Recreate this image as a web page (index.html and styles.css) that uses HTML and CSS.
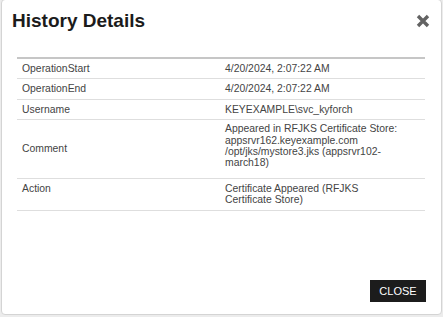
FILE: index.html
```html
<!DOCTYPE html>
<html>
<head>
<meta charset="utf-8">
<link rel="stylesheet" href="styles.css">
</head>
<body>
<div class="modal">
  <div class="header">
    <h1 class="title">History Details</h1>
    <button class="x-btn" aria-label="Close">
      <svg width="14" height="14" viewBox="0 0 14 14"><path d="M2 2 L12 12 M12 2 L2 12" stroke="#636363" stroke-width="3.4" stroke-linecap="butt"/></svg>
    </button>
  </div>
  <table class="details">
    <tr><td class="lbl">OperationStart</td><td class="val">4/20/2024, 2:07:22 AM</td></tr>
    <tr><td class="lbl">OperationEnd</td><td class="val">4/20/2024, 2:07:22 AM</td></tr>
    <tr><td class="lbl">Username</td><td class="val">KEYEXAMPLE\svc_kyforch</td></tr>
    <tr class="tall"><td class="lbl">Comment</td><td class="val">Appeared in RFJKS Certificate&nbsp;Store: appsrvr162.keyexample.com /opt/jks/mystore3.jks (appsrvr102-march18)</td></tr>
    <tr><td class="lbl top">Action</td><td class="val">Certificate Appeared (RFJKS Certificate&nbsp;Store)</td></tr>
  </table>
  <div class="footer">
    <button class="close-btn">CLOSE</button>
  </div>
</div>
</body>
</html>
```
FILE: styles.css
```css
html, body {
  margin: 0;
  padding: 0;
  background: #ececec;
}
body {
  font-family: "Liberation Sans", Arial, sans-serif;
  width: 443px;
  height: 317px;
  overflow: hidden;
}
.modal {
  box-sizing: border-box;
  width: 441px;
  height: 316px;
  margin-left: 1px;
  margin-top: -1px;
  background: #fff;
  border: 1px solid #d4d4d4;
  border-radius: 4px;
  display: flex;
  flex-direction: column;
}
.header {
  display: flex;
  justify-content: space-between;
  align-items: flex-start;
  padding: 10px 11px 0 10px;
  height: 47px;
}
.title {
  margin: 0;
  font-size: 19px;
  font-weight: bold;
  color: #1b1b1b;
  line-height: 22px;
}
.x-btn {
  border: 0;
  background: none;
  padding: 0;
  margin-top: 4px;
  width: 14px;
  height: 14px;
  display: block;
}
.x-btn svg { display: block; }
.details {
  margin: 0 15px;
  width: 408px;
  border-collapse: collapse;
  border-top: 2px solid #c6c6c6;
  font-size: 10.4px;
  line-height: 11.4px;
  color: #444;
}
.details td {
  border-bottom: 1px solid #dedede;
  padding: 4px 5px 4px 5px;
  vertical-align: middle;
}
.details td.lbl {
  width: 184px;
  padding-left: 5px;
}
.details td.val {
  padding-left: 14px;
  padding-right: 5px;
  vertical-align: top;
}
.details tr.tall td.val {
  padding-top: 3px;
  padding-bottom: 9px;
}
.details td.lbl.top {
  vertical-align: top;
}
.footer {
  margin-top: auto;
  display: flex;
  justify-content: flex-end;
  padding: 0 15px 12px 0;
}
.close-btn {
  background: #1c1c1c;
  color: #fff;
  border: 0;
  border-radius: 0;
  font-family: "Liberation Sans", Arial, sans-serif;
  font-size: 11px;
  width: 56px;
  height: 22px;
  padding: 0;
}
```
